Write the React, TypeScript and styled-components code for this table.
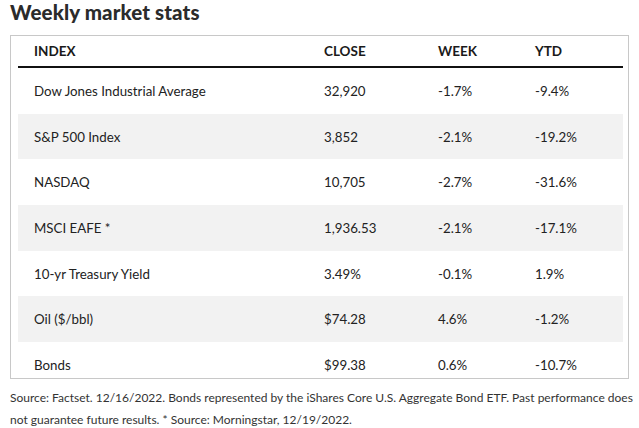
import React from 'react'
import styled, { createGlobalStyle } from 'styled-components'

const Global = createGlobalStyle`
  body {
    margin: 0;
    background: #fff;
    font-family: Lato, "Open Sans", sans-serif;
  }
`

const Page = styled.div`
  width: 639px;
  padding: 0 0 0 10px;
  box-sizing: border-box;
`

const Title = styled.h1`
  margin: 0;
  font-size: 20.5px;
  line-height: 24px;
  font-weight: 900;
  color: #2b2b2b;
  letter-spacing: 0.1px;
`

const Box = styled.div`
  margin-top: 11px;
  width: 619px;
  height: 344px;
  box-sizing: border-box;
  border: 1px solid #c8c8c8;
  padding: 0 5px 0 7px;
  overflow: hidden;
`

const Row = styled.div<{ $shade?: boolean }>`
  display: grid;
  grid-template-columns: 290px 114px 97px 1fr;
  padding-left: 16px;
  align-items: center;
  height: 45.7px;
  background: ${p => (p.$shade ? '#f2f2f2' : '#fff')};
  font-size: 13.3px;
  color: #222;
`

const HeadRow = styled(Row)`
  height: 30px;
  border-bottom: 2px solid #111;
  font-weight: 700;
  font-size: 13.5px;
  color: #1a1a1a;
`

const Note = styled.p`
  margin: 8px 0 0;
  font-size: 12px;
  line-height: 22px;
  color: #333;
  width: 625px;
`

const data = [
  ['Dow Jones Industrial Average', '32,920', '-1.7%', '-9.4%'],
  ['S&P 500 Index', '3,852', '-2.1%', '-19.2%'],
  ['NASDAQ', '10,705', '-2.7%', '-31.6%'],
  ['MSCI EAFE *', '1,936.53', '-2.1%', '-17.1%'],
  ['10-yr Treasury Yield', '3.49%', '-0.1%', '1.9%'],
  ['Oil ($/bbl)', '$74.28', '4.6%', '-1.2%'],
  ['Bonds', '$99.38', '0.6%', '-10.7%'],
]

export default function App() {
  return (
    <>
      <Global />
      <Page>
        <Title>Weekly market stats</Title>
        <Box>
          <HeadRow>
            <span>INDEX</span>
            <span>CLOSE</span>
            <span>WEEK</span>
            <span>YTD</span>
          </HeadRow>
          {data.map((r, i) => (
            <Row key={i} $shade={i % 2 === 1}>
              {r.map((c, j) => (
                <span key={j}>{c}</span>
              ))}
            </Row>
          ))}
        </Box>
        <Note>
          Source: Factset. 12/16/2022. Bonds represented by the iShares Core U.S. Aggregate Bond ETF. Past performance does
          not guarantee future results. * Source: Morningstar, 12/19/2022.
        </Note>
      </Page>
    </>
  )
}
